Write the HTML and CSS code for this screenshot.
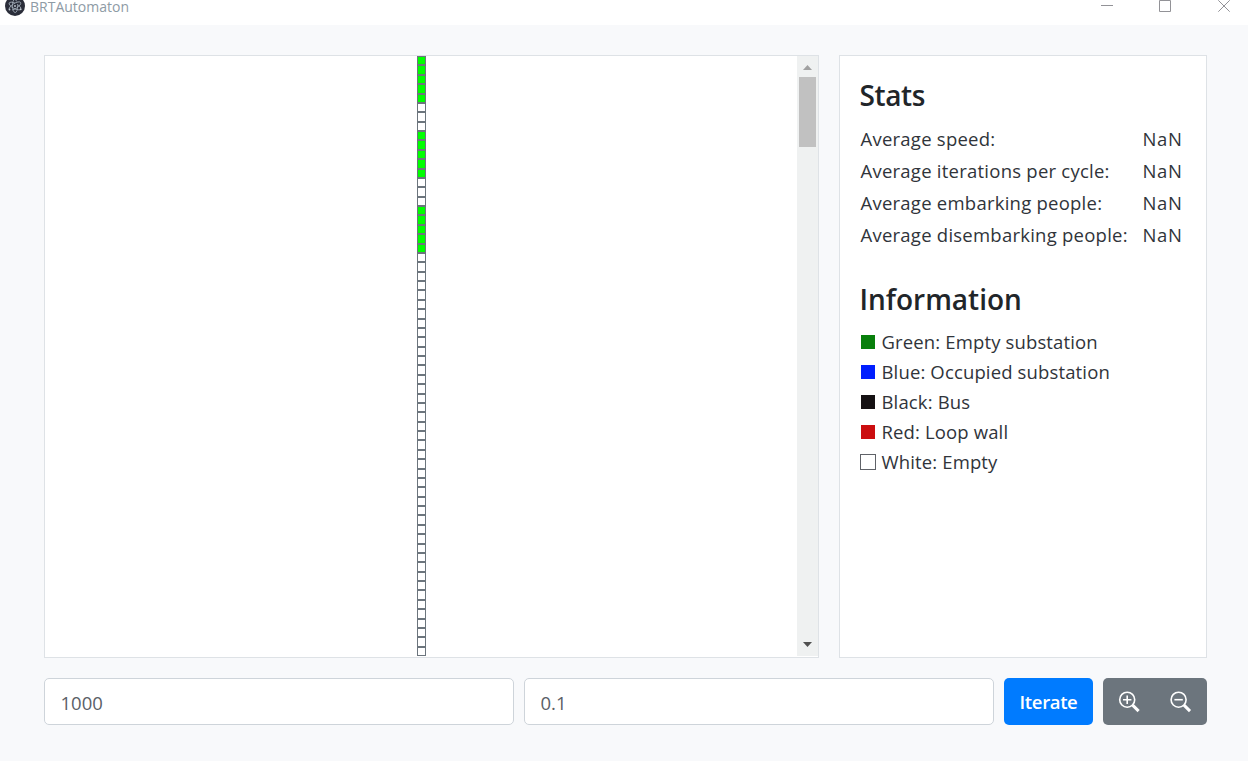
FILE: index.html
```html
<!DOCTYPE html>
<html lang="en">
<head>
<meta charset="utf-8">
<title>BRTAutomaton</title>
<link rel="stylesheet" href="styles.css">
</head>
<body>
<header class="titlebar">
  <svg class="app-icon" width="20" height="16" viewBox="0 0 20 16">
    <circle cx="10" cy="6" r="10" fill="#2b2e3a"/>
    <g fill="none" stroke="#a3adb8" stroke-width=".8">
      <ellipse cx="10" cy="6" rx="6.600" ry="2.600" transform="rotate(28 10 6)" stroke-dasharray="21 3 8"/>
      <ellipse cx="10" cy="6" rx="6.600" ry="2.600" transform="rotate(-32 10 6)" stroke-dasharray="12 3 20"/>
      <ellipse cx="10" cy="6" rx="6.600" ry="2.600" transform="rotate(88 10 6)" stroke-dasharray="18 3 10"/>
    </g>
    <g fill="#c4ccd4"><circle cx="10" cy="6" r=".9"/><circle cx="4.500" cy="9.500" r=".9"/><circle cx="15.700" cy="9.300" r=".9"/></g>
  </svg>
  <span class="app-name">BRTAutomaton</span>
  <svg class="window-controls" width="130" height="14" viewBox="0 0 130 14" fill="none" stroke="#929297">
    <path d="M1 5.500h12M59.500 .5h11v11h-11z"/>
    <path d="M118.300 .3l11.400 11.400M129.700 .3l-11.400 11.400"/>
  </svg>
</header>
<main class="app">
  <div class="panels">
    <section class="panel viewport">
      <div class="road" id="road"></div>
      <div class="scrollbar">
        <div class="arrow up"></div>
        <div class="thumb"></div>
        <div class="arrow down"></div>
      </div>
    </section>
    <aside class="panel side">
      <h2 class="stats-title">Stats</h2>
      <dl class="stats">
        <div class="stat"><dt>Average speed:</dt><dd>NaN</dd></div>
        <div class="stat"><dt>Average iterations per cycle:</dt><dd>NaN</dd></div>
        <div class="stat"><dt>Average embarking people:</dt><dd>NaN</dd></div>
        <div class="stat"><dt>Average disembarking people:</dt><dd>NaN</dd></div>
      </dl>
      <h2>Information</h2>
      <ul class="legend">
        <li><i class="swatch green"></i>Green: Empty substation</li>
        <li><i class="swatch blue"></i>Blue: Occupied substation</li>
        <li><i class="swatch black"></i>Black: Bus</li>
        <li><i class="swatch red"></i>Red: Loop wall</li>
        <li><i class="swatch white"></i>White: Empty</li>
      </ul>
    </aside>
  </div>
  <div class="controls">
    <input class="field" type="text" value="1000">
    <input class="field" type="text" value="0.1">
    <button class="btn iterate">Iterate</button>
    <div class="zoom">
      <button class="btn zoom-btn" aria-label="Zoom in"><svg width="22" height="22" viewBox="0 0 22 22" fill="none" stroke="#fff"><circle cx="9.200" cy="8.700" r="7.500" stroke-width="1.600"/><path d="M9.200 4.500v8.400M5 8.700h8.400" stroke-width="1.600"/><path d="M14.600 14.100l6 6" stroke-width="3"/></svg></button>
      <button class="btn zoom-btn" aria-label="Zoom out"><svg width="22" height="22" viewBox="0 0 22 22" fill="none" stroke="#fff"><circle cx="8.600" cy="8.700" r="7.500" stroke-width="1.600"/><path d="M4.400 8.700h8.400" stroke-width="1.600"/><path d="M14 14.100l6 6" stroke-width="3"/></svg></button>
    </div>
  </div>
</main>
<script src="script.js"></script>
</body>
</html>
```

FILE: styles.css
```css
* { box-sizing: border-box; margin: 0; padding: 0; }
body {
  width: 1248px;
  height: 761px;
  overflow: hidden;
  background: #f8f9fb;
  color: #212529;
  font-family: "Open Sans", "Noto Sans", sans-serif;
  font-size: 18.500px;
}
.titlebar {
  display: flex;
  height: 25px;
  padding: 0 18px 0 5px;
  background: #fff;
}
.app-icon { display: block; }
.app-name {
  margin-left: 5px;
  color: #8e9ba5;
  font-size: 14px;
  line-height: 14px;
  white-space: nowrap;
}
.window-controls { display: block; margin-left: auto; }
.app { padding: 30px 41px 0 44px; }
.panels { display: flex; gap: 20px; height: 603px; }
.panel { background: #fff; border: 1px solid #dee2e6; }
.viewport { display: flex; width: 775px; }
.road { width: 9px; height: 600px; margin-left: 372px; }
.cell { height: 9.375px; border: 1px solid #6c757d; background: #fff; }
.cell.station { background: #0f0; }
.scrollbar {
  display: flex;
  flex-direction: column;
  align-items: center;
  width: 21px;
  height: 600px;
  margin-left: auto;
  background: #eff1f1;
}
.arrow { width: 9px; height: 5px; }
.up { margin: 9px 0 7px; background: #a0a0a0; clip-path: polygon(50% 0, 100% 100%, 0 100%); }
.down { margin: auto 0 9px; background: #505050; clip-path: polygon(0 0, 100% 0, 50% 100%); }
.thumb { width: 17px; height: 70px; background: #c1c1c1; }
.side { width: 368px; padding: 21px 20px 0 19.500px; white-space: nowrap; }
h2 { font-size: 28px; font-weight: 600; line-height: 36px; }
.stats-title { letter-spacing: -.4px; }
.stats { margin: 10px 0 30px 1px; color: #30343a; letter-spacing: .24px; }
.stat { display: flex; justify-content: space-between; width: 322px; height: 32px; line-height: 32px; }
.stat dd { letter-spacing: .6px; }
.legend { margin-top: 9px; color: #30343a; letter-spacing: .14px; list-style: none; }
.legend li { display: flex; align-items: center; height: 30px; }
.swatch { width: 16px; height: 16px; margin: 1px 6px 0 0; border: 1px solid #fff; }
.green { background: #087f0c; }
.blue { background: #001eff; }
.black { background: #151113; }
.red { background: #cb0d10; }
.white { border-color: #5f6268; }
.controls { display: flex; gap: 10px; height: 47px; margin-top: 20px; }
.field {
  width: 470px;
  height: 47px;
  padding: 1px 15.500px 0;
  border: 1px solid #ced4da;
  border-radius: 5px;
  background: #fff;
  color: #5a6067;
  font: inherit;
}
.btn { border: 0; color: #fff; font: inherit; }
.iterate { width: 89px; border-radius: 5px; background: #007bff; font-weight: 600; letter-spacing: -.35px; }
.zoom { display: flex; width: 104px; border-radius: 5px; background: #6c757d; }
.zoom-btn { display: flex; align-items: center; justify-content: center; width: 52px; background: none; }
```

FILE: script.js
```js
const road = document.getElementById('road');
for (let i = 0; i < 64; i++) {
  const cell = document.createElement('div');
  const isStation = i < 21 && i % 8 < 5;
  cell.className = isStation ? 'cell station' : 'cell';
  road.appendChild(cell);
}
```
